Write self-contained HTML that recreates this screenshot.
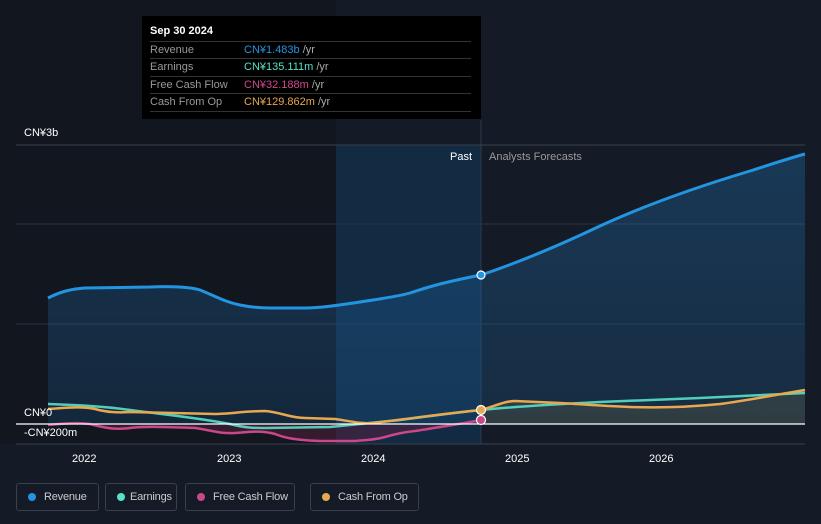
<!DOCTYPE html>
<html style="overflow:hidden"><head><meta charset="utf-8"><style>
html,body{margin:0;background:#151b26;width:821px;height:524px;overflow:hidden;font-family:"Liberation Sans",sans-serif}
.tt{position:absolute;left:142px;top:16px;width:339px;height:103px;background:#000;color:#fff;font-size:11px;white-space:nowrap}
.tt .h{position:absolute;left:8px;top:9px;font-weight:bold;color:#fff}
.tt .r{position:absolute;left:8px;width:321px;height:17px;border-top:1px solid #333;line-height:17px}
.tt .l{color:#999;position:absolute;left:0}
.tt .v{position:absolute;left:94px}
.tt .u{color:#aaa}
.lg{position:absolute;top:483px;height:28px;border:1px solid #3a404b;border-radius:3px;color:#ccc;font-size:11px;letter-spacing:-0.2px;line-height:26px;box-sizing:border-box;white-space:nowrap}
.lg i{position:absolute;left:11px;top:9px;width:8px;height:8px;border-radius:50%}
.lg span{position:absolute;left:27px}
</style></head><body>
<svg width="821" height="524" style="position:absolute;left:0;top:0">
<defs>
<linearGradient id="rv" x1="0" y1="0" x2="0" y2="1"><stop offset="0" stop-color="#1e6fb0" stop-opacity=".35"/><stop offset="1" stop-color="#1e6fb0" stop-opacity=".2"/></linearGradient>
</defs>
<rect x="0" y="0" width="336" height="444" fill="#12161f"/>
<rect x="336" y="145" width="145" height="299" fill="#122a42"/>
<line x1="481" y1="120" x2="481" y2="444" stroke="#2a3a50" stroke-width="1"/>
<line x1="16" y1="145" x2="805" y2="145" stroke="#3a404b"/>
<line x1="16" y1="224" x2="805" y2="224" stroke="#2c323d"/>
<line x1="16" y1="324" x2="805" y2="324" stroke="#2c323d"/>
<path d="M48,298 C60,292 70,289 85,288 L150,287 C175,286 190,287 200,290 C215,296 225,302 240,305 C250,307 260,308 270,308 L305,308 C320,308 340,305 360,302 C380,299 400,296 410,293 C425,288 440,283 481,275 C520,262 560,245 600,226 C650,203 700,186 750,171 C775,163 790,158 805,154 L805,424 L48,424 Z" fill="url(#rv)"/>
<path d="M48,298 C60,292 70,289 85,288 L150,287 C175,286 190,287 200,290 C215,296 225,302 240,305 C250,307 260,308 270,308 L305,308 C320,308 340,305 360,302 C380,299 400,296 410,293 C425,288 440,283 481,275 C520,262 560,245 600,226 C650,203 700,186 750,171 C775,163 790,158 805,154" fill="none" stroke="#2394df" stroke-width="3"/>
<path d="M481,410 L515,401 L560,403 L600,405 L660,408 L700,406 L750,400 L805,390 L805,424 L481,424 Z" fill="#3a4545" opacity=".7"/>
<path d="M48,425 L80,423 L110,429 L150,427 L200,428 L230,434 L270,432 L300,440 L340,441 L375,440 L410,433 L450,427 L481,420 L481,424 L48,424Z" fill="#5a2040" opacity=".5"/>
<path d="M48,404 C80,405 110,407 130,410 C160,414 200,418 230,424 C245,428 255,428 265,428 L330,427 C350,425 370,423 400,420 C430,416 460,412 481,410 C520,406 560,404 600,402 L700,398 L805,393" fill="none" stroke="#58e0c8" stroke-width="2.5" opacity=".9"/>
<path d="M48,425 C60,424 75,422 90,424 C105,428 115,430 130,428 C145,426 165,427 195,428 C210,430 220,434 235,433 C250,432 260,430 275,434 C285,438 295,440 320,441 L355,441 C365,440 375,440 385,437 C395,434 405,432 415,431 C440,427 460,424 481,420" fill="none" stroke="#c8488a" stroke-width="2.5"/>
<path d="M48,409 C65,408 80,406 95,409 C105,412 115,413 130,412 L215,414 C230,414 245,411 265,411 C280,412 290,418 305,418 L335,419 C350,421 360,424 372,423 C400,420 440,414 481,410 C495,406 505,401 515,401 L560,403 C580,404 600,406 630,407 C660,408 690,407 720,404 C750,400 780,394 805,390" fill="none" stroke="#e8a850" stroke-width="2.5"/>
<line x1="16" y1="424" x2="805" y2="424" stroke="#ffffff" stroke-width="1.2"/>
<line x1="16" y1="444" x2="805" y2="444" stroke="#3a404b"/>
<circle cx="481" cy="275" r="4" fill="#2394df" stroke="#fff" stroke-width="1.2"/>
<circle cx="481" cy="410" r="4.5" fill="#e8a850" stroke="#fff" stroke-width="1.2"/>
<circle cx="481" cy="420" r="4.5" fill="#c8488a" stroke="#fff" stroke-width="1.2"/>
<g font-family="Liberation Sans, sans-serif" font-size="11" fill="#fff">
<text x="24" y="136">CN¥3b</text>
<text x="24" y="416">CN¥0</text>
<text x="24" y="436">-CN¥200m</text>
<text x="450" y="160">Past</text>
<text x="489" y="160" fill="#999">Analysts Forecasts</text>
<text x="72" y="462">2022</text>
<text x="217" y="462">2023</text>
<text x="361" y="462">2024</text>
<text x="505" y="462">2025</text>
<text x="649" y="462">2026</text>
</g>
</svg>
<div class="tt">
<div class="h">Sep 30 2024</div>
<div class="r" style="top:25px"><span class="l">Revenue</span><span class="v"><span style="color:#2394df">CN¥1.483b</span> <span class="u">/yr</span></span></div>
<div class="r" style="top:42px"><span class="l">Earnings</span><span class="v"><span style="color:#58e0c8">CN¥135.111m</span> <span class="u">/yr</span></span></div>
<div class="r" style="top:60px"><span class="l">Free Cash Flow</span><span class="v"><span style="color:#d04890">CN¥32.188m</span> <span class="u">/yr</span></span></div>
<div class="r" style="top:77px;border-bottom:1px solid #333"><span class="l">Cash From Op</span><span class="v"><span style="color:#e8a850">CN¥129.862m</span> <span class="u">/yr</span></span></div>
</div>
<div class="lg" style="left:16px;width:83px"><i style="background:#2394df"></i><span>Revenue</span></div>
<div class="lg" style="left:105px;width:72px"><i style="background:#58e0c8"></i><span style="left:24px">Earnings</span></div>
<div class="lg" style="left:185px;width:110px"><i style="background:#c8488a"></i><span>Free Cash Flow</span></div>
<div class="lg" style="left:310px;width:109px"><i style="background:#e8a850"></i><span>Cash From Op</span></div>
</body></html>
